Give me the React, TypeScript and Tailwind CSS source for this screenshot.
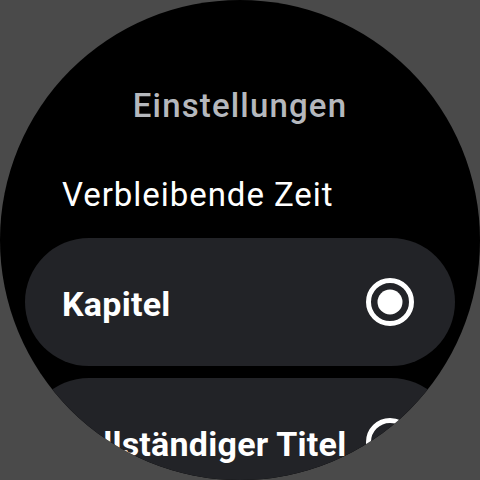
import React from "react";

function Radio({ checked }: { checked: boolean }) {
  return (
    <svg width="48" height="48" viewBox="0 0 48 48" className="shrink-0">
      <circle cx="24" cy="24" r="21.5" fill="none" stroke="#ffffff" strokeWidth="5" />
      {checked && <circle cx="24" cy="24" r="12.5" fill="#ffffff" />}
    </svg>
  );
}

function Chip({ label, checked }: { label: string; checked: boolean }) {
  return (
    <div className="mx-[25px] h-[128px] shrink-0 rounded-full bg-[#222327] flex items-center justify-between pl-[37px] pr-[41px]">
      <span className="mt-[3px] text-[34px] leading-[40px] font-bold tracking-[0.25px] text-white whitespace-nowrap">{label}</span>
      <Radio checked={checked} />
    </div>
  );
}

export default function App() {
  return (
    <div className="w-[480px] h-[480px] bg-[#4a4a4a]" style={{ fontFamily: "Roboto, 'Noto Sans', sans-serif" }}>
      <div className="w-[480px] h-[480px] rounded-full bg-black overflow-hidden flex flex-col">
        <div className="pt-[86px] text-center text-[33px] leading-[40px] font-medium tracking-[1.15px] text-[#b5b8bd]">Einstellungen</div>
        <div className="mt-[49px] pl-[62px] text-[33px] leading-[40px] tracking-[0.95px] text-white whitespace-nowrap">Verbleibende Zeit</div>
        <div className="mt-[23px] flex flex-col gap-[12px]">
          <Chip label="Kapitel" checked={true} />
          <Chip label="Vollständiger Titel" checked={false} />
        </div>
      </div>
    </div>
  );
}
